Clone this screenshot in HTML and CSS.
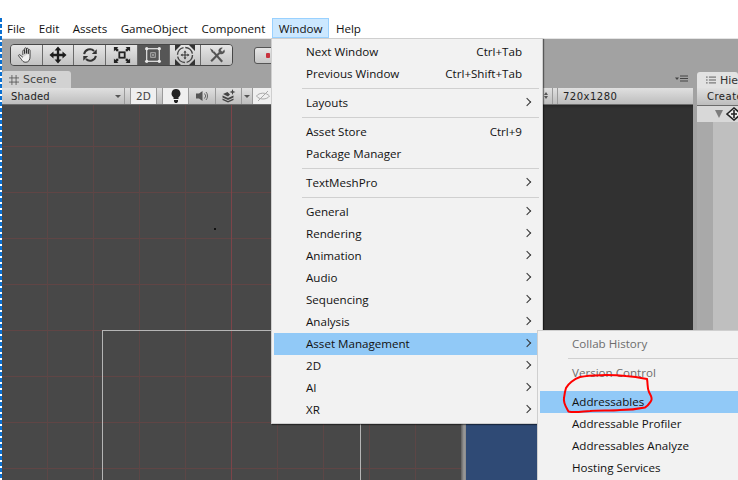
FILE: index.html
```html
<!DOCTYPE html>
<html>
<head>
    <meta name="viewport" content="width=device-width, initial-scale=1.0">
    <link rel="stylesheet" href="styles.css">
</head>
<body>
    <div id="window">
        <div class="top-gap"></div>
        <div class="menubar">
            <span class="menubar-item">File</span>
            <span class="menubar-item">Edit</span>
            <span class="menubar-item">Assets</span>
            <span class="menubar-item">GameObject</span>
            <span class="menubar-item">Component</span>
            <span class="menubar-item open">Window</span>
            <span class="menubar-item">Help</span>
        </div>

        <div class="editor">
            <div class="toolbar">
                <div class="tool-group">
                    <div class="tool">
                        <svg class="icon" viewBox="0 0 20 20"><path d="M6.500 10V5.500a1 1 0 0 1 2 0V9M8.500 8V3a1 1 0 0 1 2 0V8.500M10.500 8V3.500a1 1 0 0 1 2 0V9M12.500 8.500V5a1 1 0 0 1 2 0V12c0 3-1.500 6-4.500 6H9c-2 0-3-1.500-4-3L1.800 11c-.5-1 .8-1.800 1.600-1L6.500 12.500" fill="#f0f0f0" stroke="#222" stroke-width="0.900"/></svg>
                    </div>
                    <div class="tool">
                        <svg class="icon" viewBox="0 0 20 20"><path d="M10 0.500L13.800 5H11.300V8.700H15V6.200L19.500 10L15 13.800V11.300H11.300V15H13.800L10 19.500L6.200 15H8.700V11.300H5V13.800L0.500 10L5 6.200V8.700H8.700V5H6.200Z" fill="#1c1c1c"/></svg>
                    </div>
                    <div class="tool">
                        <svg class="icon" viewBox="0 0 20 20"><path d="M3.500 9a6.500 6.500 0 0 1 11-3.500M16.500 11a6.500 6.500 0 0 1-11 3.500" fill="none" stroke="#333" stroke-width="2.200"/><path d="M17.500 3.500V9H12ZM2.500 16.500V11H8Z" fill="#333"/></svg>
                    </div>
                    <div class="tool">
                        <svg class="icon" viewBox="0 0 20 20"><rect x="7" y="7" width="6" height="6" fill="none" stroke="#222" stroke-width="2"/><path d="M1 1H6L4.500 2.500L6.500 4.500L4.500 6.500L2.500 4.500L1 6ZM19 1V6L17.500 4.500L15.500 6.500L13.500 4.500L15.500 2.500L14 1ZM1 19V14L2.500 15.500L4.500 13.500L6.500 15.500L4.500 17.500L6 19ZM19 19H14L15.500 17.500L13.500 15.500L15.500 13.500L17.500 15.500L19 14Z" fill="#222"/></svg>
                    </div>
                    <div class="tool active">
                        <svg class="icon" viewBox="0 0 20 20"><rect x="3" y="3" width="14" height="14" fill="none" stroke="#e8e8e8" stroke-width="1.300"/><circle cx="3" cy="3" r="1.800" fill="#e8e8e8"/><circle cx="17" cy="3" r="1.800" fill="#e8e8e8"/><circle cx="3" cy="17" r="1.800" fill="#e8e8e8"/><circle cx="17" cy="17" r="1.800" fill="#e8e8e8"/><rect x="7.500" y="7.500" width="5" height="5" fill="none" stroke="#bbb"/><circle cx="10" cy="10" r="0.900" fill="#e8e8e8"/></svg>
                    </div>
                    <div class="tool">
                        <svg class="icon wide" viewBox="0 0 20 20"><path d="M0 0H6L0 6ZM20 0H14L20 6ZM0 20H6L0 14ZM20 20H14L20 14Z" fill="#333"/><circle cx="10" cy="10" r="7.500" fill="none" stroke="#444" stroke-width="1.400" stroke-dasharray="10 1.800"/><path d="M10 5.500L11.500 7.500H10.500V9.500H12.500V8.500L14.500 10L12.500 11.500V10.500H10.500V12.500H11.500L10 14.500L8.500 12.500H9.500V10.500H7.500V11.500L5.500 10L7.500 8.500V9.500H9.500V7.500H8.500Z" fill="#333"/></svg>
                    </div>
                    <div class="tool">
                        <svg class="icon" viewBox="0 0 20 20"><path d="M15.800 17.500L6 6.500" stroke="#555" stroke-width="2.400"/><path d="M2 2.500L5.500 4.500L6.500 7L4.500 7.500Z" fill="#555"/><path d="M3.500 17L13 7.500" stroke="#555" stroke-width="2.400"/><path d="M11.500 5.500a3.800 3.800 0 0 1 5-3.500L14 4.500L15.800 6.300L18.300 3.800a3.800 3.800 0 0 1-5 5Z" fill="#555"/></svg>
                    </div>
                </div>
                <div class="play-button"><span class="record-dot"></span></div>
            </div>

            <div class="panels">
                <div class="scene-panel">
                    <div class="tab-strip">
                        <div class="tab scene-tab">
                            <svg class="tab-icon" viewBox="0 0 12 12"><path d="M3.500 0V12M8.500 0V12M0 3.500H12M0 8.500H12" stroke="#555" fill="none"/></svg>
                            Scene
                        </div>
                    </div>
                    <div class="panel-bar">
                        <div class="bar-cell shaded">Shaded<span class="caret"></span></div>
                        <div class="bar-gap"></div>
                        <div class="bar-cell on two-d">2D</div>
                        <div class="bar-gap"></div>
                        <div class="bar-cell on lights">
                            <svg class="bar-icon" viewBox="0 0 14 14"><path d="M7 0a4.500 4.500 0 0 1 2.500 8.200V10H4.500V8.200A4.500 4.500 0 0 1 7 0ZM5 11H9V12.500L8 14H6L5 12.500Z" fill="#222"/></svg>
                        </div>
                        <div class="bar-cell sound">
                            <svg class="bar-icon" viewBox="0 0 14 14"><path d="M1 4.500H4L7.500 2V12L4 9.500H1Z" fill="#555"/><path d="M9.500 4.500a3.500 3.500 0 0 1 0 5M11 3a6 6 0 0 1 0 8" fill="none" stroke="#666"/></svg>
                        </div>
                        <div class="bar-cell layers">
                            <svg class="bar-icon" viewBox="0 0 14 14"><path d="M0.500 6.500L6 9L11.500 6.500V8.500L6 11L0.500 8.500ZM0.500 9.500L6 12L11.500 9.500V11L6 13.500L0.500 11ZM1 5L5.500 3L8 5.500L6 7.500Z" fill="#444"/><path d="M10.500 0L11.300 2.200L13.500 3L11.300 3.800L10.500 6L9.700 3.800L7.500 3L9.700 2.200Z" fill="#444"/></svg>
                        </div>
                        <div class="bar-cell layers-arrow"><span class="caret"></span></div>
                        <div class="bar-cell on hidden-eye">
                            <svg class="bar-icon" viewBox="0 0 14 14"><path d="M0.500 7C3 3.500 10 3 13.500 7C11 11 3 11 0.500 7Z" fill="none" stroke="#a8a8a8"/><path d="M2 12L12 2" stroke="#a8a8a8"/></svg>
                        </div>
                    </div>
                    <div class="scene-canvas">
                        <div class="scene-speck"></div>
                        <div class="camera-frame"></div>
                    </div>
                </div>

                <div class="splitter"></div>

                <div class="game-panel">
                    <div class="tab-strip tab-strip-right">
                        <svg class="tab-menu" viewBox="0 0 14 8"><path d="M0 2.500H4L2 5Z" fill="#444"/><path d="M5 1H13M5 3.500H13M5 6H13" stroke="#444"/></svg>
                    </div>
                    <div class="panel-bar game-bar">
                        <span class="updown"></span>
                        <span class="game-stepper"></span>
                        <span class="game-size">720x1280</span>
                    </div>
                    <div class="game-view">
                        <div class="game-letterbox"></div>
                        <div class="game-camera"></div>
                    </div>
                </div>

                <div class="hierarchy-panel">
                    <div class="tab hierarchy-tab">
                        <svg class="tab-icon" viewBox="0 0 12 12"><path d="M3.500 2.500H12M3.500 6H12M3.500 9.500H12" stroke="#444"/><path d="M0 2.500H2M0 6H2M0 9.500H2" stroke="#444"/></svg>
                        Hierarchy
                    </div>
                    <div class="panel-bar create-bar">Create</div>
                    <div class="scene-row">
                        <span class="fold-arrow"></span>
                        <svg class="unity-icon" viewBox="0 0 16 14"><path d="M1 7L8 1L15 7L8 13Z" fill="#eee" stroke="#222" stroke-width="1.600"/><path d="M5 7H11M8 3V11" stroke="#222" stroke-width="1.600"/></svg>
                    </div>
                    <div class="hierarchy-body">
                        <div class="hierarchy-gutter"></div>
                        <div class="hierarchy-list"></div>
                    </div>
                </div>
            </div>
        </div>
    </div>

    <div class="selection-edge"></div>

    <div class="menu main-menu">
        <div class="menu-item"><span>Next Window</span><span class="shortcut">Ctrl+Tab</span></div>
        <div class="menu-item"><span>Previous Window</span><span class="shortcut">Ctrl+Shift+Tab</span></div>
        <div class="menu-sep"></div>
        <div class="menu-item sub"><span>Layouts</span></div>
        <div class="menu-sep"></div>
        <div class="menu-item"><span>Asset Store</span><span class="shortcut">Ctrl+9</span></div>
        <div class="menu-item"><span>Package Manager</span></div>
        <div class="menu-sep"></div>
        <div class="menu-item sub"><span>TextMeshPro</span></div>
        <div class="menu-sep"></div>
        <div class="menu-item sub"><span>General</span></div>
        <div class="menu-item sub"><span>Rendering</span></div>
        <div class="menu-item sub"><span>Animation</span></div>
        <div class="menu-item sub"><span>Audio</span></div>
        <div class="menu-item sub"><span>Sequencing</span></div>
        <div class="menu-item sub"><span>Analysis</span></div>
        <div class="menu-item sub selected"><span>Asset Management</span></div>
        <div class="menu-item sub"><span>2D</span></div>
        <div class="menu-item sub"><span>AI</span></div>
        <div class="menu-item sub"><span>XR</span></div>
    </div>

    <div class="menu sub-menu">
        <div class="menu-item disabled"><span>Collab History</span></div>
        <div class="menu-sep"></div>
        <div class="menu-item disabled"><span>Version Control</span></div>
        <div class="menu-gap"></div>
        <div class="menu-item selected"><span>Addressables</span></div>
        <div class="menu-item"><span>Addressable Profiler</span></div>
        <div class="menu-item"><span>Addressables Analyze</span></div>
        <div class="menu-item"><span>Hosting Services</span></div>
    </div>

    <svg class="scribble" viewBox="0 0 96 46">
        <path d="M6 18C8 14 14 9 20 7C30 5 50 4.500 66 6C74 6.500 82 8 87 9C88 14 87 18 89 22C91 26 93 28 91 31C89 34 88 36 85 37.500C78 39 68 40 60 40C50 41 40 40 30 41C22 41.500 14 43 8.500 41.500C6 37 3 33 4 28C4.500 24 5 21 6 18Z" fill="none" stroke="#f00" stroke-width="2"/>
    </svg>
</body>
</html>
```

FILE: styles.css
```css
* {
    box-sizing: border-box;
}

html, body {
    margin: 0;
    height: 100%;
    overflow: hidden;
    background-color: #fff;
    font-family: "Open Sans", "Noto Sans", sans-serif;
    font-size: 11.6px;
    color: #111;
}

#window {
    display: flex;
    flex-direction: column;
    height: 480px;
}

.top-gap {
    height: 18px;
}

.menubar {
    display: flex;
    height: 20px;
    align-items: stretch;
    padding-left: 0.3px;
}

.menubar-item {
    display: flex;
    align-items: center;
    padding: 0 6.7px;
}

.menubar-item.open {
    background-color: #cce8ff;
    box-shadow: inset 0 0 0 1px #99d1ff;
}

.selection-edge {
    position: absolute;
    left: 0;
    top: 18px;
    bottom: 0;
    width: 2px;
    background: repeating-linear-gradient(180deg, #0a6fd0 0 4px, #fff 4px 6px);
}

.editor {
    flex: 1;
    display: flex;
    flex-direction: column;
    min-height: 0;
    background-color: #a2a2a2;
    border-top: 1px solid #e4e4e4;
}

.toolbar {
    display: flex;
    align-items: flex-start;
    height: 32px;
    padding: 5px 0 0 10px;
}

.tool-group {
    display: flex;
    width: 223px;
    height: 22px;
    border: 1px solid #474747;
    border-radius: 4px;
    overflow: hidden;
}

.tool {
    flex: 1;
    display: flex;
    align-items: center;
    justify-content: center;
    background: linear-gradient(#e6e6e6, #c2c2c2);
    border-right: 1px solid #6a6a6a;
}

.tool:last-child {
    border-right: none;
}

.tool.active {
    background: #565656;
}

.icon {
    width: 18px;
    height: 18px;
}

.icon.wide {
    width: 20px;
    height: 20px;
}

.play-button {
    display: flex;
    align-items: center;
    justify-content: center;
    width: 28px;
    height: 17px;
    margin: 3px 0 0 21px;
    background: linear-gradient(#e6e6e6, #c6c6c6);
    border: 1px solid #555;
    border-radius: 3px;
}

.record-dot {
    width: 4px;
    height: 5px;
    background-color: #c8323e;
    border-radius: 1px;
}

.panels {
    flex: 1;
    display: flex;
    min-height: 0;
}

.scene-panel {
    display: flex;
    flex-direction: column;
    width: 461px;
}

.tab-strip {
    display: flex;
    height: 17px;
}

.tab {
    display: flex;
    align-items: center;
    gap: 4px;
    background-color: #d2d2d2;
    border-radius: 3px 3px 0 0;
    font-family: "DejaVu Sans", sans-serif;
    font-size: 11px;
    color: #444;
}

.scene-tab {
    width: 69px;
    margin-left: 2px;
    padding-left: 7px;
}

.tab-icon {
    width: 10px;
    height: 10px;
    flex: none;
}

.panel-bar {
    display: flex;
    align-items: stretch;
    height: 17px;
    background: linear-gradient(#e0e0e0, #bdbdbd);
    border-bottom: 1px solid #6c6c6c;
    font-family: "DejaVu Sans", sans-serif;
    font-size: 10px;
    color: #222;
    white-space: nowrap;
    overflow: hidden;
}

.bar-cell {
    display: flex;
    align-items: center;
    justify-content: center;
    border-right: 1px solid #9a9a9a;
}

.bar-cell.on {
    background: #efefef;
}

.shaded {
    justify-content: space-between;
    width: 120px;
    margin-left: 5px;
    padding: 0 3px 0 6px;
    letter-spacing: 0.2px;
}

.bar-gap {
    width: 6px;
    border-right: 1px solid #9a9a9a;
}

.two-d {
    width: 26px;
    color: #444;
    font-size: 10.5px;
}

.lights {
    width: 26px;
}

.sound {
    width: 27px;
}

.layers {
    width: 26px;
}

.layers-arrow {
    width: 11px;
}

.hidden-eye {
    width: 20px;
}

.bar-icon {
    width: 14px;
    height: 14px;
}

.caret {
    width: 0;
    height: 0;
    border-left: 3px solid transparent;
    border-right: 3px solid transparent;
    border-top: 3px solid #555;
}

.scene-canvas {
    position: relative;
    flex: 1;
    background-color: #484848;
    background-image:
        linear-gradient(90deg, transparent 231px, #7c4449 231px, #7c4449 232px, transparent 232px),
        linear-gradient(90deg, transparent 45px, #5c4646 45px),
        linear-gradient(180deg, transparent 45px, #604545 45px);
    background-size: 100% 100%, 46px 100%, 100% 46px;
    background-position: 0 0, 2px 0, 0 -4px;
    overflow: hidden;
}

.scene-speck {
    position: absolute;
    left: 214px;
    top: 123px;
    width: 2px;
    height: 2px;
    background-color: #111;
}

.camera-frame {
    position: absolute;
    left: 102px;
    top: 225px;
    width: 259px;
    height: 200px;
    border: 1px solid #b5b5b5;
}

.splitter {
    width: 5px;
    background: linear-gradient(90deg, #5e5e5e, #9a9a9a 60%, #8a8a8a);
}

.game-panel {
    display: flex;
    flex-direction: column;
    width: 227px;
}

.tab-strip-right {
    justify-content: flex-end;
    align-items: center;
    padding: 0 4px 2px 0;
}

.tab-menu {
    width: 14px;
    height: 8px;
}

.game-bar {
    justify-content: flex-start;
    padding-left: 86px;
}

.updown {
    position: relative;
    width: 0;
}

.updown::before {
    content: "";
    position: absolute;
    left: -8px;
    top: 4px;
    border-left: 2px solid transparent;
    border-right: 2px solid transparent;
    border-bottom: 3px solid #555;
}

.updown::after {
    content: "";
    position: absolute;
    left: -8px;
    top: 8px;
    border-left: 2px solid transparent;
    border-right: 2px solid transparent;
    border-top: 3px solid #555;
}

.game-stepper {
    width: 6px;
    border-left: 1px solid #9a9a9a;
    border-right: 1px solid #9a9a9a;
}

.game-size {
    display: flex;
    align-items: center;
    margin-left: 5px;
    letter-spacing: 0.5px;
}

.game-view {
    flex: 1;
    display: flex;
    flex-direction: column;
    min-height: 0;
}

.game-letterbox {
    flex: 1;
    background-color: #313131;
    box-shadow: inset 0 3px 3px -2px #222;
}

.game-camera {
    height: 140px;
    background-color: #2f4a75;
}

.hierarchy-panel {
    display: flex;
    flex-direction: column;
    flex: 1;
    min-width: 0;
    margin-left: 4px;
}

.hierarchy-tab {
    height: 16px;
    padding-left: 9px;
    margin-top: 1px;
    white-space: nowrap;
    overflow: hidden;
    color: #333;
    background-color: #e2e2e2;
}

.create-bar {
    align-items: center;
    padding-left: 10px;
    letter-spacing: 0.5px;
    height: 18px;
}

.scene-row {
    display: flex;
    align-items: center;
    gap: 3px;
    height: 16px;
    padding-left: 18px;
    background-color: #d8d8d8;
}

.fold-arrow {
    width: 0;
    height: 0;
    border-left: 4px solid transparent;
    border-right: 4px solid transparent;
    border-top: 8px solid #7d7d7d;
}

.unity-icon {
    width: 16px;
    height: 14px;
    flex: none;
}

.hierarchy-body {
    flex: 1;
    display: flex;
}

.hierarchy-gutter {
    width: 16px;
    background-color: #a9a9a9;
}

.hierarchy-list {
    flex: 1;
    background-color: #bfbfbf;
}

.menu {
    position: absolute;
    background-color: #f2f2f2;
    border: 1px solid #cfcfcf;
    padding: 2px;
}

.main-menu {
    left: 271px;
    top: 38px;
    width: 272px;
    height: 386px;
    box-shadow: 1px 1px 1px rgba(0, 0, 0, 0.45);
}

.sub-menu {
    left: 537px;
    top: 330px;
    width: 210px;
    height: 160px;
}

.menu-item {
    position: relative;
    display: flex;
    justify-content: space-between;
    align-items: center;
    height: 22px;
    padding: 0 18px 2px 32px;
}

.menu-item.selected {
    background-color: #91c9f7;
}

.menu-item.disabled {
    color: #6d6d6d;
}

.menu-item.sub::after {
    content: "";
    position: absolute;
    right: 10px;
    top: 7px;
    width: 5px;
    height: 5px;
    border-top: 1px solid #333;
    border-right: 1px solid #333;
    transform: rotate(45deg);
}

.menu-sep {
    height: 1px;
    margin: 3px 1px 3px 28px;
    background-color: #d0d0d0;
}

.menu-gap {
    height: 7px;
}

.scribble {
    position: absolute;
    left: 560px;
    top: 370px;
    width: 96px;
    height: 46px;
}
```
